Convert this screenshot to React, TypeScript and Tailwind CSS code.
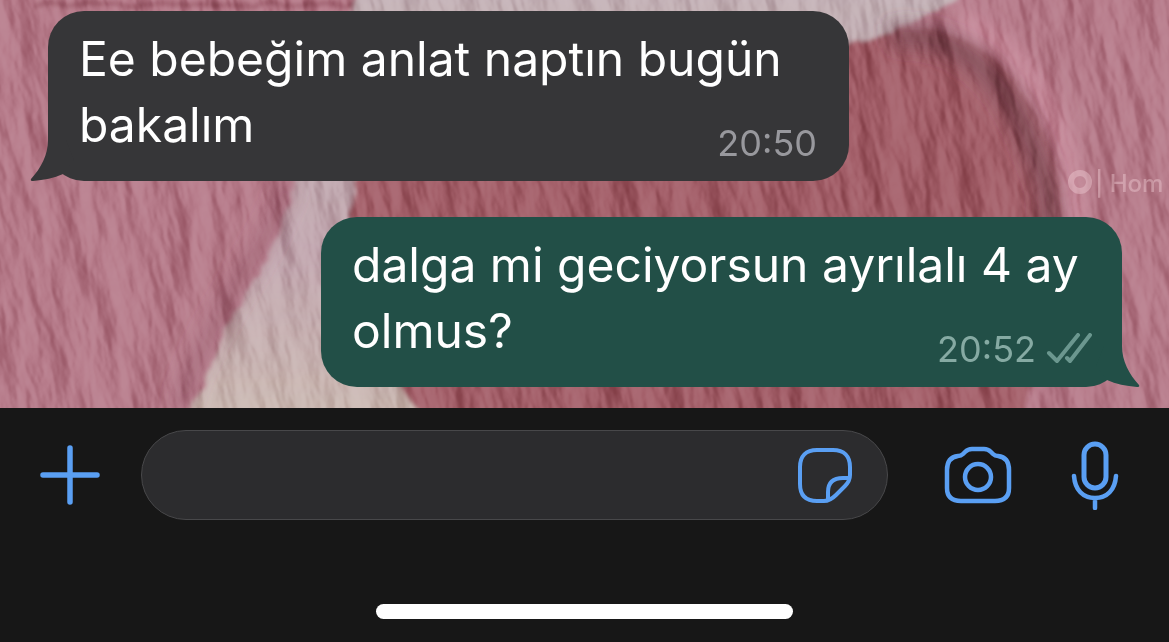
import type { ReactNode } from "react";

type Message = {
  id: number;
  text: string;
  time: string;
  mine: boolean;
};

const messages: Message[] = [
  { id: 1, text: "Ee bebeğim anlat naptın bugün bakalım", time: "20:50", mine: false },
  { id: 2, text: "dalga mi geciyorsun ayrılalı 4 ay olmus?", time: "20:52", mine: true },
];

function Wallpaper() {
  return (
    <svg
      className="absolute inset-0 h-full w-full"
      viewBox="0 0 1169 408"
      preserveAspectRatio="xMidYMid slice"
      aria-hidden="true"
    >
      <defs>
        <filter id="plaster" x="0" y="0" width="100%" height="100%" colorInterpolationFilters="sRGB">
          <feTurbulence type="fractalNoise" baseFrequency="0.028 0.008" numOctaves="5" seed="21" />
          <feColorMatrix values="0 0 0 0 0  0 0 0 0 0  0 0 0 0 0  1 0 0 0 0" />
          <feGaussianBlur stdDeviation="0.9" />
          <feDiffuseLighting surfaceScale="13" diffuseConstant="0.68" lightingColor="#ffffff">
            <feDistantLight azimuth="200" elevation="45" />
          </feDiffuseLighting>
        </filter>
        <filter id="rough" x="-5%" y="-5%" width="110%" height="110%">
          <feTurbulence type="fractalNoise" baseFrequency="0.05" numOctaves="2" seed="3" />
          <feDisplacementMap in="SourceGraphic" scale="12" />
          <feGaussianBlur stdDeviation="2" />
        </filter>
        <filter id="soft" x="-20%" y="-20%" width="140%" height="140%">
          <feGaussianBlur stdDeviation="9" />
        </filter>
        <linearGradient id="pale" x1="0" y1="0" x2="0" y2="1">
          <stop offset="0" stopColor="#c4b3b7" />
          <stop offset="0.6" stopColor="#c2a7af" />
          <stop offset="1" stopColor="#cdbdb4" />
        </linearGradient>
      </defs>
      <rect width="1169" height="408" fill="#b77c8b" />
      <g filter="url(#rough)">
        <path d="M362 -20 H980 C940 20 880 30 840 60 L500 440 H185 C210 330 265 290 300 170 Z" fill="url(#pale)" />
        <path
          d="M357 180 C380 80 760 60 850 46 C910 14 985 30 1020 90 C1055 140 1066 190 1063 235 C1055 300 1040 350 1020 430 H432 C385 370 335 280 357 180 Z"
          fill="#a4616b"
        />
        <path d="M35 5 H355" stroke="#9c5c6b" strokeWidth="5" />
      </g>
      <path
        d="M890 36 C970 30 1010 90 1030 140 C1048 180 1054 200 1050 240"
        fill="none"
        stroke="#6b3a48"
        strokeOpacity="0.6"
        strokeWidth="24"
        filter="url(#soft)"
      />
      <path
        d="M960 20 C1030 50 1070 120 1078 240"
        fill="none"
        stroke="#d99aac"
        strokeOpacity="0.6"
        strokeWidth="16"
        filter="url(#soft)"
      />
      <path
        d="M290 180 C270 250 205 320 180 408"
        fill="none"
        stroke="#8f5264"
        strokeOpacity="0.45"
        strokeWidth="18"
        filter="url(#soft)"
      />
      <g transform="rotate(-12 585 204)" className="mix-blend-soft-light">
        <rect x="-60" y="-180" width="1290" height="770" opacity="0.55" filter="url(#plaster)" />
      </g>
      <g opacity="0.45">
        <circle cx="1080" cy="182" r="9" fill="none" stroke="#edc9d1" strokeWidth="6" />
        <text x="1095" y="192" className="text-[24px] font-medium [font-family:Inter,sans-serif]" fill="#edc9d1">
          | Hom
        </text>
      </g>
    </svg>
  );
}

function Tail({ mine }: { mine: boolean }) {
  return (
    <svg
      width="50"
      height="41"
      viewBox="0 0 50 41"
      className={
        mine
          ? "absolute -right-[18px] bottom-0 -scale-x-100 fill-[#224f47]"
          : "absolute -left-[18px] bottom-0 fill-[#363638]"
      }
      aria-hidden="true"
    >
      <path d="M18 0 C18 15 11 28 1 39 Q0 41 3 41 C14 40 24 38 33 34 L44 20 L36 0 Z" />
    </svg>
  );
}

function Ticks() {
  return (
    <svg width="46" height="32" viewBox="0 0 46 32" fill="none" aria-label="Delivered">
      <path
        d="M3 20 L11 28 L32 2 M21 25 L24 28 L44 2"
        stroke="#6b978f"
        strokeWidth="4"
        strokeLinecap="round"
        strokeLinejoin="round"
      />
    </svg>
  );
}

function Bubble({ message }: { message: Message }) {
  const { text, time, mine } = message;
  return (
    <li
      className={
        mine
          ? "relative flow-root w-[801px] max-w-[75%] self-end rounded-[36px] bg-[#224f47] pt-[15px] pr-[30px] pb-[18px] pl-[31px] text-[48px] leading-[66px] text-white"
          : "relative flow-root w-[801px] max-w-[75%] self-start rounded-[36px] bg-[#363638] pt-[15px] pr-8 pb-[18px] pl-[31px] text-[48px] leading-[66px] text-white"
      }
    >
      <Tail mine={mine} />
      <span className="relative">{text}</span>
      {/* floated so it shares the last line of the message when there is room */}
      <div className="relative float-right mt-[31px] flex h-10 items-center gap-[10px]">
        <time className={mine ? "text-[36px] leading-10 text-[#86aaa3]" : "text-[36px] leading-10 text-[#98989d]"}>
          {time}
        </time>
        {mine && <Ticks />}
      </div>
    </li>
  );
}

function IconButton({ label, children }: { label: string; children: ReactNode }) {
  return (
    <button type="button" aria-label={label} className="shrink-0 text-[#5a9ff3]">
      {children}
    </button>
  );
}

function Composer() {
  return (
    <footer className="bg-[#171717] pt-[22px] pb-[23px]">
      <form className="flex items-center pr-[50px] pl-10">
        <IconButton label="Attach">
          <svg width="60" height="60" viewBox="0 0 60 60" fill="none" stroke="currentColor" strokeWidth="5.5" strokeLinecap="round">
            <path d="M30 3 V57 M3 30 H57" />
          </svg>
        </IconButton>
        <div className="ml-[41px] flex h-[90px] min-w-0 flex-1 items-center rounded-full border border-[#48484a] bg-[#2c2c2e] pr-[34px] pl-8">
          <input type="text" aria-label="Message" className="h-full min-w-0 flex-1 bg-transparent text-[48px] text-white outline-none" />
          <IconButton label="Stickers">
            <svg width="56" height="56" viewBox="0 0 56 56" fill="none" stroke="currentColor" strokeWidth="4" strokeLinejoin="round">
              <path d="M20 3 H36 C47 3 53 9 53 20 V28 C53 33 51 36 48 39 L39 48 C35 52 32 54 27 54 H20 C8 54 3 48 3 37 V20 C3 9 9 3 20 3 Z" />
              <path d="M52 31 H46 C36 31 31 36 31 45 V52" />
            </svg>
          </IconButton>
        </div>
        <div className="ml-[56px] flex items-center gap-[59px]">
          <IconButton label="Camera">
            <svg width="68" height="60" viewBox="0 0 68 60" fill="none" stroke="currentColor" strokeWidth="4.5" strokeLinejoin="round">
              <path d="M28 4 H40 C43 4 45 5 47 7 L49 9 C50 10 52 11 54 11 C62 12 65 17 65 25 V43 C65 52 60 56 51 56 H17 C8 56 3 52 3 43 V25 C3 17 6 12 14 11 C16 11 18 10 19 9 L21 7 C23 5 25 4 28 4 Z" />
              <circle cx="34" cy="32" r="13" strokeWidth="4.5" />
            </svg>
          </IconButton>
          <IconButton label="Record voice message">
            <svg width="48" height="70" viewBox="0 0 48 70" fill="none" stroke="currentColor" strokeWidth="4.5" strokeLinecap="round">
              <rect x="13" y="4" width="22" height="44" rx="11" strokeWidth="5" />
              <path d="M3 36 C4 50 12 58 24 58 C36 58 44 50 45 36 M24 58 V68" />
            </svg>
          </IconButton>
        </div>
      </form>
      <div className="mx-auto mt-[84px] h-[15px] w-[417px] max-w-1/2 rounded-full bg-white" />
    </footer>
  );
}

export default function App() {
  return (
    <main className="flex min-h-screen flex-col bg-[#171717] [font-family:Inter,sans-serif]">
      <section className="relative flex flex-1 flex-col justify-end overflow-hidden">
        <Wallpaper />
        <ul className="relative flex flex-col gap-9 pt-[10px] pr-[47px] pb-[21px] pl-12">
          {messages.map((message) => (
            <Bubble key={message.id} message={message} />
          ))}
        </ul>
      </section>
      <Composer />
    </main>
  );
}
